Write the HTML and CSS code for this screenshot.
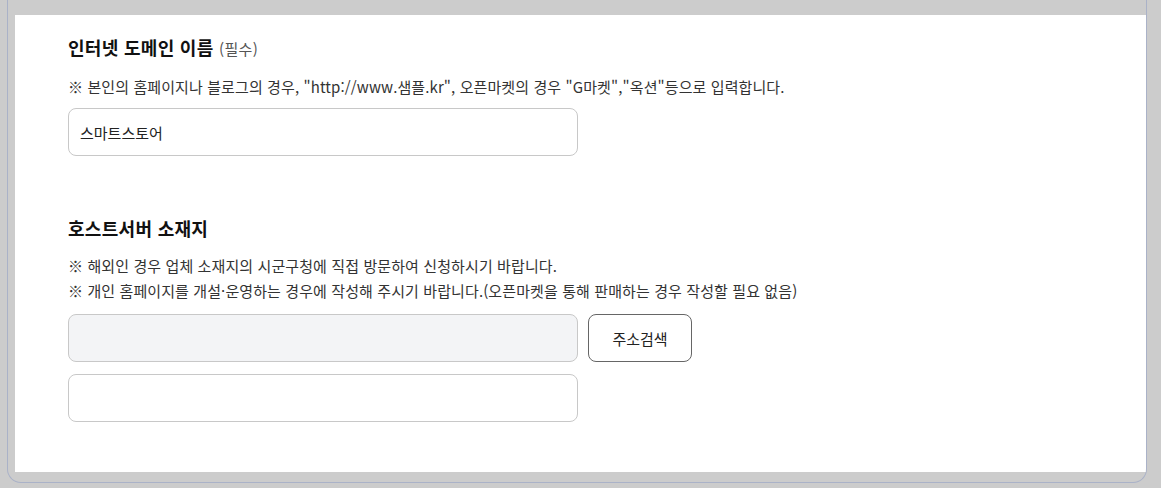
FILE: index.html
```html
<!DOCTYPE html>
<html lang="ko">
<head>
<meta charset="utf-8">
<link rel="stylesheet" href="styles.css">
</head>
<body>
<div class="frame">
  <div class="panel">
    <section class="field">
      <h2 class="title">인터넷 도메인 이름 <span class="req">(필수)</span></h2>
      <p class="note">※ 본인의 홈페이지나 블로그의 경우, "http://www.샘플.kr", 오픈마켓의 경우 "G마켓","옥션"등으로 입력합니다.</p>
      <div class="input">스마트스토어</div>
    </section>
    <section class="field second">
      <h2 class="title">호스트서버 소재지</h2>
      <p class="note">※ 해외인 경우 업체 소재지의 시군구청에 직접 방문하여 신청하시기 바랍니다.</p>
      <p class="note">※ 개인 홈페이지를 개설·운영하는 경우에 작성해 주시기 바랍니다.(오픈마켓을 통해 판매하는 경우 작성할 필요 없음)</p>
      <div class="row">
        <div class="input disabled"></div>
        <button class="btn" type="button">주소검색</button>
      </div>
      <div class="input"></div>
    </section>
  </div>
</div>
</body>
</html>
```

FILE: styles.css
```css
html, body {
  margin: 0;
  padding: 0;
  background: #cccccc;
  font-family: "Noto Sans CJK KR", "Noto Sans", sans-serif;
  color: #222;
}
.frame {
  margin-left: 7px;
  width: 1131px;
  padding: 15px 0 10px 7px;
  border: 1px solid #aab2c8;
  border-top: none;
  border-radius: 0 0 14px 14px;
  background: #cccccc;
  overflow: hidden;
  height: 457px;
  box-sizing: content-box;
}
.panel {
  background: #fff;
  height: 457px;
  padding: 0 0 0 53px;
  box-sizing: border-box;
}
.field {
  padding-top: 19px;
}
.field.second {
  padding-top: 59px;
}
.title {
  margin: 0;
  font-size: 18px;
  font-weight: 700;
  color: #111;
  letter-spacing: 0.3px;
  line-height: 26px;
}
.req {
  font-size: 15px;
  font-weight: 400;
  color: #555;
  letter-spacing: 0.4px;
}
.note {
  margin: 0;
  font-size: 15px;
  color: #333;
  line-height: 25px;
  letter-spacing: 0.1px;
}
.note.wide {
  letter-spacing: 0.2px;
}
.field .title + .note {
  margin-top: 12px;
}
.input {
  width: 510px;
  height: 48px;
  box-sizing: border-box;
  border: 1px solid #c8c8c8;
  border-radius: 8px;
  background: #fff;
  padding: 0 11px;
  display: flex;
  align-items: center;
  font-size: 15px;
  color: #222;
}
.field:first-child .input {
  margin-top: 9px;
}
.row {
  display: flex;
  gap: 10px;
  margin-top: 11px;
  margin-bottom: 12px;
}
.input.disabled {
  background: #f3f4f6;
}
.btn {
  width: 104px;
  height: 48px;
  border: 1px solid #666;
  border-radius: 8px;
  background: #fff;
  font-family: inherit;
  font-size: 15px;
  color: #222;
  cursor: pointer;
}
```
